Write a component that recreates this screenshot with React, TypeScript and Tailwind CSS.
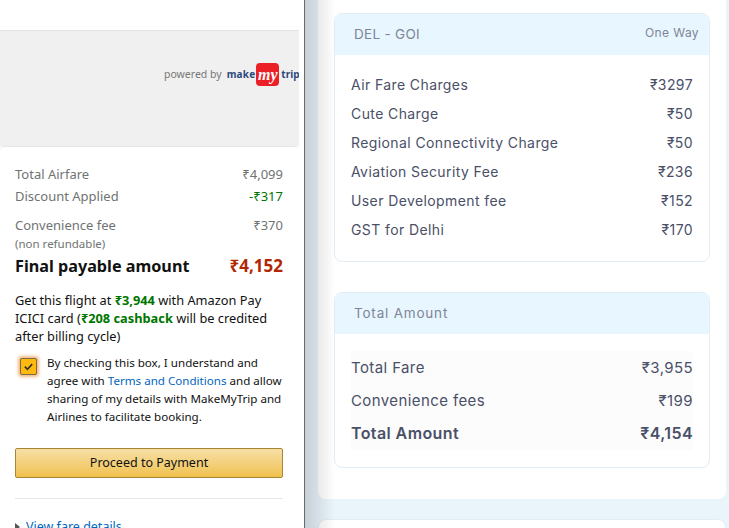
const fareRows = [
  { label: "Air Fare Charges", value: "₹3297" },
  { label: "Cute Charge", value: "₹50" },
  { label: "Regional Connectivity Charge", value: "₹50" },
  { label: "Aviation Security Fee", value: "₹236" },
  { label: "User Development fee", value: "₹152" },
  { label: "GST for Delhi", value: "₹170" },
]

function LeftPanel() {
  return (
    <aside className="w-[305px] shrink-0 h-full bg-white border-r border-[#6b6b6b] overflow-hidden font-['Noto_Sans',sans-serif]">
      <div className="h-[30px]" />
      <div className="w-[299px] h-[116px] bg-[#f0f0f0] border-t border-[#e4e4e4] flex items-start overflow-hidden pl-[164px] pt-[32px]">
        <span className="text-[10.5px] leading-[23px] text-[#777] mr-[5px] whitespace-nowrap">powered by</span>
        <span className="text-[10px] leading-[23px] tracking-[0.2px] font-bold text-[#2b4a7c] mr-[1px]">make</span>
        <span className="w-[23px] h-[23px] shrink-0 rounded-[4px] bg-[#eb2026] flex items-center justify-center text-white text-[16px] italic font-bold font-['Liberation_Serif',serif] leading-none">my</span>
        <span className="text-[10px] leading-[23px] font-bold text-[#2b4a7c] ml-[2px]">trip</span>
      </div>
      <div className="w-[298px] h-[382px] border-t border-[#e6e6e6] rounded-t-[4px] px-[15px] pt-[18px] text-[#111]">
        <div className="flex justify-between text-[13px] leading-[18px] text-[#6f7373]">
          <span>Total Airfare</span>
          <span>₹4,099</span>
        </div>
        <div className="flex justify-between text-[13px] leading-[18px] text-[#6f7373] mt-[4px]">
          <span>Discount Applied</span>
          <span className="text-[#007600]">-₹317</span>
        </div>
        <div className="flex justify-between text-[13px] leading-[18px] text-[#6f7373] mt-[11px]">
          <span>Convenience fee</span>
          <span>₹370</span>
        </div>
        <div className="text-[11.5px] leading-[18px] mt-[1px] text-[#6f7373]">(non refundable)</div>
        <div className="flex justify-between items-center text-[16.2px] leading-[24px] mt-[1px] font-bold">
          <span>Final payable amount</span>
          <span className="text-[17px] text-[#b12704]">₹4,152</span>
        </div>
        <p className="text-[12.8px] leading-[18px] mt-[13px]">
          Get this flight at <b className="text-[#007600]">₹3,944</b> with Amazon Pay ICICI card (<b className="text-[#007600]">₹208 cashback</b> will be credited after billing cycle)
        </p>
        <div className="flex mt-[9px]">
          <div className="w-[17px] h-[17px] mt-[4px] ml-[5px] mr-[10px] shrink-0 rounded-[2px] bg-[#ffb90f] border border-[#7a6a45] shadow-[0_0_3px_2px_rgba(228,121,17,0.5)] flex items-center justify-center">
            <svg viewBox="0 0 12 12" className="w-[11px] h-[11px]" fill="none" stroke="#333" strokeWidth="1.8">
              <path d="M2 6.2 L4.8 9 L10 3.4" />
            </svg>
          </div>
          <p className="text-[11.6px] leading-[18px] whitespace-nowrap">
            By checking this box, I understand and
            <br />
            agree with <span className="text-[#0066c0]">Terms and Conditions</span> and allow
            <br />
            sharing of my details with MakeMyTrip and
            <br />
            Airlines to facilitate booking.
          </p>
        </div>
        <button className="block w-full h-[30px] mt-[22px] rounded-[2px] border border-[#a88734] bg-gradient-to-b from-[#f7dfa5] to-[#f0c14b] text-[12.5px] text-[#111]">
          Proceed to Payment
        </button>
        <div className="h-px bg-[#e7e7e7] mt-[20px]" />
        <div className="flex items-center mt-[19px] text-[12.5px] leading-[18px] text-[#0066c0]">
          <span className="w-0 h-0 border-y-[4px] border-y-transparent border-l-[5px] border-l-[#555] mr-[6px]" />
          View fare details
        </div>
      </div>
    </aside>
  )
}

function FareCard({ title, titleClass, right, children }: { title: string; titleClass: string; right?: string; children: React.ReactNode }) {
  return (
    <div className="rounded-[8px] border border-[#e3edf5] bg-white overflow-hidden">
      <div className="h-[41px] bg-[#e8f7ff] flex justify-between pl-[19px] pr-[10px] text-[#7f8497]">
        <span className={titleClass}>{title}</span>
        {right && <span className="text-[12px] leading-[37px] tracking-[0.4px]">{right}</span>}
      </div>
      {children}
    </div>
  )
}

export default function App() {
  return (
    <div className="relative flex w-[729px] h-[528px] overflow-hidden bg-white">
      <LeftPanel />
      <main className="relative flex-1 h-full bg-[#e9f4fb] pl-[13px] pr-[3px] font-['Inter',sans-serif] overflow-hidden">
        <div className="bg-white rounded-b-[8px] px-[16px] pt-[13px] pb-[31px] flex flex-col gap-[30px]">
          <FareCard title="DEL - GOI" titleClass="text-[13.5px] leading-[41px] tracking-[0.3px]" right="One Way">
            <div className="px-[16px] pt-[15px] pb-[17px] flex flex-col text-[14px] leading-[29px] tracking-[0.4px] text-[#4a5068]">
              {fareRows.map((row) => (
                <div key={row.label} className="flex justify-between">
                  <span>{row.label}</span>
                  <span>{row.value}</span>
                </div>
              ))}
            </div>
          </FareCard>
          <FareCard title="Total Amount" titleClass="text-[13.5px] leading-[41px] tracking-[0.8px]">
            <div className="mx-[16px] mt-[17px] mb-[17px] bg-[#fcfcfc] text-[15px] leading-[33px] tracking-[0.4px] text-[#4a5068]">
              <div className="flex justify-between">
                <span>Total Fare</span>
                <span>₹3,955</span>
              </div>
              <div className="flex justify-between">
                <span>Convenience fees</span>
                <span>₹199</span>
              </div>
              <div className="flex justify-between text-[16px] font-semibold">
                <span>Total Amount</span>
                <span>₹4,154</span>
              </div>
            </div>
          </FareCard>
        </div>
        <div className="mt-[20px] h-[40px] bg-white rounded-t-[8px] border border-[#e3edf5]" />
        <div className="absolute inset-y-0 left-0 w-[30px] bg-gradient-to-r from-black/15 to-transparent" />
      </main>
    </div>
  )
}
